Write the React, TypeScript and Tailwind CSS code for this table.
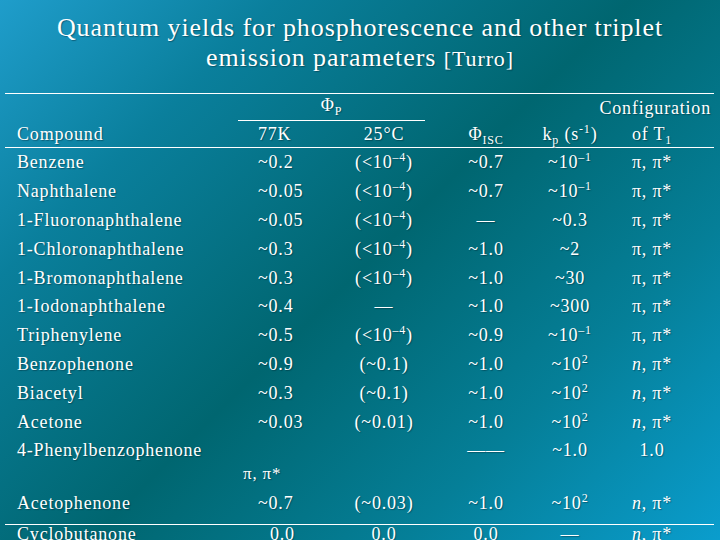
import React from "react";

type Row = {
  name: string;
  a: React.ReactNode;
  b: React.ReactNode;
  c: React.ReactNode;
  d: React.ReactNode;
  e: React.ReactNode;
};

const neg4 = (
  <>
    (&lt;10<sup className="text-[12px] -top-[7px]">–4</sup>)
  </>
);
const tenNeg1 = (
  <>
    ~10<sup className="text-[12px] -top-[7px]">–1</sup>
  </>
);
const ten2 = (
  <>
    ~10<sup className="text-[12px] -top-[7px]">2</sup>
  </>
);
const pipi = <>π, π*</>;
const npi = (
  <>
    <span className="italic">n</span>, π*
  </>
);

const rows: Row[] = [
  { name: "Benzene", a: "~0.2", b: neg4, c: "~0.7", d: tenNeg1, e: pipi },
  { name: "Naphthalene", a: "~0.05", b: neg4, c: "~0.7", d: tenNeg1, e: pipi },
  { name: "1-Fluoronaphthalene", a: "~0.05", b: neg4, c: "—", d: "~0.3", e: pipi },
  { name: "1-Chloronaphthalene", a: "~0.3", b: neg4, c: "~1.0", d: "~2", e: pipi },
  { name: "1-Bromonaphthalene", a: "~0.3", b: neg4, c: "~1.0", d: "~30", e: pipi },
  { name: "1-Iodonaphthalene", a: "~0.4", b: "—", c: "~1.0", d: "~300", e: pipi },
  { name: "Triphenylene", a: "~0.5", b: neg4, c: "~0.9", d: tenNeg1, e: pipi },
  { name: "Benzophenone", a: "~0.9", b: "(~0.1)", c: "~1.0", d: ten2, e: npi },
  { name: "Biacetyl", a: "~0.3", b: "(~0.1)", c: "~1.0", d: ten2, e: npi },
  { name: "Acetone", a: "~0.03", b: "(~0.01)", c: "~1.0", d: ten2, e: npi },
  { name: "4-Phenylbenzophenone", a: "", b: "", c: "——", d: "~1.0", e: "1.0" },
];

function Cells({ r }: { r: Row }) {
  return (
    <>
      <div className="w-[233px] pl-[12px] whitespace-nowrap">{r.name}</div>
      <div className="w-[92px] pl-[20px] whitespace-nowrap">{r.a}</div>
      <div className="w-[108px] text-center whitespace-nowrap">{r.b}</div>
      <div className="w-[96px] text-center whitespace-nowrap">{r.c}</div>
      <div className="w-[72px] text-center whitespace-nowrap">{r.d}</div>
      <div className="w-[92px] text-center whitespace-nowrap">{r.e}</div>
    </>
  );
}

export default function App() {
  return (
    <div className="w-[720px] h-[540px] overflow-hidden text-white font-['Liberation_Serif','Times_New_Roman',serif] bg-[linear-gradient(135deg,#1f9dcb_0%,#0a7f9c_22%,#006670_50%,#057f98_75%,#0a9dcd_100%)] [text-shadow:1px_1px_1px_rgba(0,30,40,0.4)]">
      <div className="pt-[13px] text-center text-[26px] leading-[30px] tracking-[0.035em]">
        <div>Quantum yields for phosphorescence and other triplet</div>
        <div>
          emission parameters <span className="text-[22px]">[Turro]</span>
        </div>
      </div>

      <div className="mt-[19px] ml-[5px] w-[709px] border-t-[1.5px] border-white text-[18px] tracking-[0.045em]">
        <div className="h-[53px]">
          <div className="flex h-[27px]">
            <div className="w-[233px]" />
            <div className="w-[187px] border-b-[1.5px] border-white text-center leading-[22px]">
              Φ<sub className="text-[12px] top-[4px]">P</sub>
            </div>
            <div className="flex-1 text-right pr-[3px] leading-[28px]">Configuration</div>
          </div>
          <div className="flex h-[26px] items-center leading-[22px]">
            <div className="w-[233px] pl-[12px]">Compound</div>
            <div className="w-[92px] pl-[20px]">77K</div>
            <div className="w-[108px] text-center">25°C</div>
            <div className="w-[96px] text-center">
              Φ<sub className="text-[12px] top-[4px]">ISC</sub>
            </div>
            <div className="w-[72px] text-center whitespace-nowrap">
              k<sub className="text-[12px] top-[4px]">p</sub> (s<sup className="text-[12px] -top-[7px]">-1</sup>)
            </div>
            <div className="w-[92px] text-center whitespace-nowrap">
              of T<sub className="text-[12px] top-[4px]">1</sub>
            </div>
          </div>
        </div>

        <div className="border-t-[1.5px] border-white">
          {rows.map((r) => (
            <div key={r.name} className="flex h-[28.8px] items-center leading-[22px]">
              <Cells r={r} />
            </div>
          ))}
          <div className="flex h-[24px] items-start leading-[18px]">
            <div className="w-[233px]" />
            <div className="pl-[5px] text-[17px] whitespace-nowrap">π, π*</div>
          </div>
          <div className="flex h-[29px] items-center leading-[22px]">
            <Cells
              r={{ name: "Acetophenone", a: "~0.7", b: "(~0.03)", c: "~1.0", d: ten2, e: npi }}
            />
          </div>
          <div className="mt-[6px] border-t-[1.5px] border-white flex h-[20px] items-center leading-[18px]">
            <div className="w-[233px] pl-[12px]">Cyclobutanone</div>
            <div className="w-[92px] pl-[32px]">0.0</div>
            <div className="w-[108px] text-center">0.0</div>
            <div className="w-[96px] text-center">0.0</div>
            <div className="w-[72px] text-center">—</div>
            <div className="w-[92px] text-center">{npi}</div>
          </div>
        </div>
      </div>
    </div>
  );
}
